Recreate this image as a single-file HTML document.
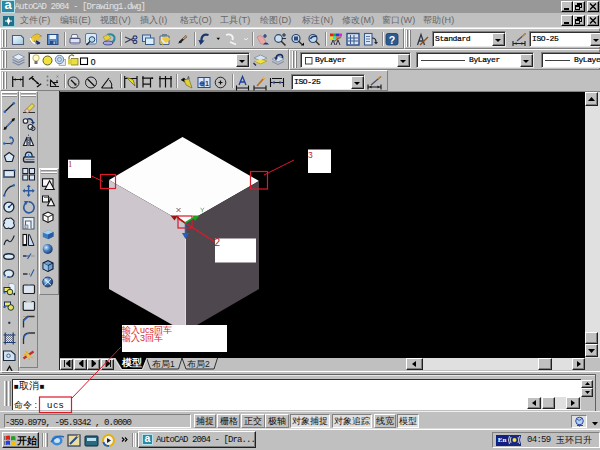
<!DOCTYPE html>
<html><head><meta charset="utf-8">
<style>
*{margin:0;padding:0;box-sizing:border-box}
html,body{width:600px;height:450px;overflow:hidden;background:#c0c0c0;font-family:"Liberation Sans",sans-serif;position:relative}
.a{position:absolute}
.mono{font-family:"Liberation Mono",monospace}
.rz{border-top:1px solid #fff;border-left:1px solid #fff;border-right:1px solid #808080;border-bottom:1px solid #808080}
.sk{border-top:1px solid #808080;border-left:1px solid #808080;border-right:1px solid #fff;border-bottom:1px solid #fff}
.grip{position:absolute;width:2px;border-left:1px solid #fff;border-right:1px solid #808080}
.sep{position:absolute;width:2px;border-left:1px solid #8a8a8a;border-right:1px solid #f4f4f4}
.hsep{position:absolute;height:2px;border-top:1px solid #8a8a8a;border-bottom:1px solid #f4f4f4}
.wbtn{position:absolute;width:12px;height:11px;background:#c0c0c0;border-top:1px solid #fff;border-left:1px solid #fff;border-right:1px solid #000;border-bottom:1px solid #000;box-shadow:inset -1px -1px #808080}
.btn{position:absolute;background:#c0c0c0;border-top:1px solid #fff;border-left:1px solid #fff;border-right:1px solid #202020;border-bottom:1px solid #202020;box-shadow:inset -1px -1px #808080}
.dd{position:absolute;background:#fff;border-top:1px solid #808080;border-left:1px solid #808080;border-right:1px solid #e8e8e8;border-bottom:1px solid #e8e8e8;box-shadow:inset 1px 1px #303030}
.ddb{position:absolute;top:1px;right:0px;bottom:0px;width:12px;background:#c0c0c0;border-top:1px solid #fff;border-left:1px solid #fff;border-right:1px solid #202020;border-bottom:1px solid #202020;box-shadow:inset -1px -1px #808080}
.ddb:after{content:"";position:absolute;left:2px;top:5px;border-left:3.5px solid transparent;border-right:3.5px solid transparent;border-top:3.5px solid #000}
.menu{position:absolute;top:15px;font-size:9px;color:#666;line-height:10px;white-space:nowrap;letter-spacing:0.2px}
.ddt{position:absolute;font-family:"Liberation Mono",monospace;font-size:8px;line-height:10px;letter-spacing:-0.4px;color:#000;white-space:nowrap;-webkit-text-stroke:0.2px #000}
</style></head><body>
<div class="a" style="left:0;top:0;width:600px;height:13px;background:#989898"></div>
<div class="a" style="left:1px;top:0;width:14px;height:13px;background:#2a8aa4;border:1px solid #b8e0ea"></div>
<div class="a" style="left:2px;top:-2px;width:12px;height:14px;color:#fff;font:bold 13px/14px 'Liberation Sans',sans-serif;text-align:center">a</div>
<div class="a mono" style="left:14.5px;top:2.2px;font-size:9px;line-height:11px;color:#e4e4e4;letter-spacing:-0.9px;white-space:nowrap">AutoCAD 2004 - [Drawing1.dwg]</div>
<div class="wbtn" style="left:561px;top:1px"></div><div class="a" style="left:564px;top:8px;width:5px;height:2px;background:#000"></div><div class="wbtn" style="left:573px;top:1px"></div><div class="a" style="left:577px;top:3px;width:5px;height:5px;border:1px solid #000;border-top-width:2px"></div><div class="a" style="left:575px;top:5px;width:5px;height:5px;border:1px solid #000;border-top-width:2px;background:#c0c0c0"></div><div class="wbtn" style="left:587px;top:1px"></div><svg class="a" style="left:589px;top:3px" width="8" height="7" viewBox="0 0 8 7"><path d="M1 0.5 L7 6.5 M7 0.5 L1 6.5" stroke="#000" stroke-width="1.4"/></svg>

<div class="a" style="left:2px;top:15px;width:13px;height:12px;background:#1f6f88;border:1px solid #9ccbd8"></div>
<svg class="a" style="left:4px;top:17px" width="9" height="8" viewBox="0 0 9 8"><path d="M4.5 0.5 v7 M1 4 h7" stroke="#fff" stroke-width="1.2"/><rect x="3" y="2.5" width="3" height="3" fill="#fff"/></svg>

<div class="menu" style="left:20px">文件(F)</div>
<div class="menu" style="left:60px">编辑(E)</div>
<div class="menu" style="left:100px">视图(V)</div>
<div class="menu" style="left:140px">插入(I)</div>
<div class="menu" style="left:180px">格式(O)</div>
<div class="menu" style="left:220px">工具(T)</div>
<div class="menu" style="left:260px">绘图(D)</div>
<div class="menu" style="left:302px">标注(N)</div>
<div class="menu" style="left:342px">修改(M)</div>
<div class="menu" style="left:382px">窗口(W)</div>
<div class="menu" style="left:423px">帮助(H)</div>
<div class="wbtn" style="left:561px;top:15px"></div><div class="a" style="left:564px;top:22px;width:5px;height:2px;background:#000"></div><div class="wbtn" style="left:573px;top:15px"></div><div class="a" style="left:577px;top:17px;width:5px;height:5px;border:1px solid #000;border-top-width:2px"></div><div class="a" style="left:575px;top:19px;width:5px;height:5px;border:1px solid #000;border-top-width:2px;background:#c0c0c0"></div><div class="wbtn" style="left:587px;top:15px"></div><svg class="a" style="left:589px;top:17px" width="8" height="7" viewBox="0 0 8 7"><path d="M1 0.5 L7 6.5 M7 0.5 L1 6.5" stroke="#000" stroke-width="1.4"/></svg>

<div class="a" style="left:0;top:27px;width:600px;height:1px;background:#e0e0e0"></div>
<div class="a rz" style="left:0;top:28px;width:404px;height:21px"></div>
<div class="a rz" style="left:404px;top:28px;width:196px;height:21px"></div>
<div class="a rz" style="left:0;top:49px;width:289px;height:21px"></div>
<div class="a rz" style="left:289px;top:49px;width:311px;height:21px"></div>
<div class="a rz" style="left:0;top:70px;width:388px;height:21px"></div>
<div class="grip" style="left:2px;top:30px;height:17px"></div><div class="grip" style="left:5px;top:30px;height:17px"></div>
<div class="grip" style="left:406px;top:30px;height:17px"></div><div class="grip" style="left:409px;top:30px;height:17px"></div>
<div class="grip" style="left:2px;top:51px;height:17px"></div><div class="grip" style="left:5px;top:51px;height:17px"></div>
<div class="grip" style="left:292px;top:51px;height:17px"></div><div class="grip" style="left:295px;top:51px;height:17px"></div>
<div class="grip" style="left:2px;top:72px;height:17px"></div><div class="grip" style="left:5px;top:72px;height:17px"></div>
<div class="sep" style="left:64px;top:32px;height:14px"></div>
<div class="sep" style="left:120px;top:32px;height:14px"></div>
<div class="sep" style="left:194px;top:32px;height:14px"></div>
<div class="sep" style="left:252px;top:32px;height:14px"></div>
<div class="sep" style="left:325px;top:32px;height:14px"></div>
<div class="sep" style="left:382px;top:32px;height:14px"></div>
<div class="sep" style="left:64px;top:74px;height:14px"></div>
<div class="sep" style="left:120px;top:74px;height:14px"></div>
<div class="sep" style="left:176px;top:74px;height:14px"></div>
<div class="sep" style="left:232px;top:74px;height:14px"></div>
<svg class="a" style="left:0px;top:0px" width="600" height="450" viewBox="0 0 600 450">
<defs>
<linearGradient id="gPage" x1="0" y1="0" x2="1" y2="1"><stop offset="0" stop-color="#f4fbff"/><stop offset="1" stop-color="#9cc8dc"/></linearGradient>
<linearGradient id="gBlue" x1="0" y1="0" x2="1" y2="1"><stop offset="0" stop-color="#8fc0e8"/><stop offset="1" stop-color="#2a62a8"/></linearGradient>
<radialGradient id="gSph" cx="0.35" cy="0.35" r="0.7"><stop offset="0" stop-color="#cfe6ff"/><stop offset="0.5" stop-color="#4a86c8"/><stop offset="1" stop-color="#1a3c70"/></radialGradient>
</defs>
<!-- new -->
<path d="M12.5 35.5 H21 L23.5 38 V44.5 H12.5 Z" fill="url(#gPage)" stroke="#4c5a7c" stroke-width="1.1"/>
<!-- open -->
<path d="M31 42 C30 38 33 34.5 38 34 L41.5 36 C38 37 34.5 39 34.5 42 Z" fill="#f0d040" stroke="#8a7020" stroke-width="0.6"/>
<path d="M32 36.5 L37 34.5 L41 38 L36 42 Z" fill="#e8c030"/>
<path d="M30.5 38 Q31 42 35 43.5" stroke="#fff" stroke-width="1.5" fill="none"/>
<path d="M35 42.5 L39.5 42.5 L38 45 Z" fill="#183078"/>
<path d="M36 41 L40 43.5" stroke="#183078" stroke-width="1.6"/>
<!-- save -->
<rect x="47.5" y="34.5" width="10.5" height="10" fill="#5a88c0" stroke="#284c84" stroke-width="1"/>
<rect x="49.5" y="35" width="6.5" height="4" fill="#e8f2fa"/>
<rect x="50" y="41" width="5.5" height="3.5" fill="#2a4c80"/>
<rect x="53.5" y="41.5" width="1.3" height="2.5" fill="#c8d8e8"/>
<!-- print -->
<path d="M72 34.5 H77 L78 38 H71 Z" fill="#f4f4f8" stroke="#505a78" stroke-width="0.8"/>
<path d="M70 38.5 H80 V43 H70 Z" fill="#e0e2ee" stroke="#4a5478" stroke-width="1"/>
<ellipse cx="75" cy="43.5" rx="4.5" ry="1.2" fill="#9098c0"/>
<!-- preview -->
<rect x="85.5" y="33.5" width="11" height="10.5" rx="1.5" fill="#d8ecf8" stroke="#5a78a8" stroke-width="1"/>
<circle cx="92" cy="39.5" r="2.8" fill="#b8dcf0" stroke="#2a4068" stroke-width="1"/>
<path d="M90 41.5 L86.5 45" stroke="#202830" stroke-width="1.4"/>
<!-- publish -->
<path d="M107 35 Q112 33 114.5 37 Q115 42 110 43" fill="none" stroke="#2a8aa0" stroke-width="2"/>
<path d="M103 37 L108 34.5 L111 38 L106 41 Z" fill="#e8d030" stroke="#8a7a20" stroke-width="0.5"/>
<ellipse cx="108" cy="43" rx="5" ry="2" fill="#a8a8e0" stroke="#3a3a80" stroke-width="0.8"/>
<!-- cut -->
<path d="M125 37 L134 41 M125 42.5 L134 38" stroke="#3a3a58" stroke-width="1.2"/>
<ellipse cx="135" cy="37.5" rx="2" ry="1.6" fill="none" stroke="#2a3a78" stroke-width="1.1"/>
<ellipse cx="135" cy="42" rx="2" ry="1.6" fill="none" stroke="#2a3a78" stroke-width="1.1"/>
<!-- copy -->
<rect x="142.5" y="35" width="8" height="6.5" fill="#c8e4f4" stroke="#3a5a8c" stroke-width="1"/>
<rect x="145.5" y="38" width="8.5" height="6.5" fill="#d8eef8" stroke="#3a5a8c" stroke-width="1"/>
<!-- paste -->
<path d="M160 36 H169 V44.5 H160 Z" fill="#d8e8f0" stroke="#506080" stroke-width="1"/>
<rect x="162" y="34" width="5" height="2.5" fill="#708090"/>
<path d="M161.5 38 L166 36.5 L170.5 39 L166 43 Z" fill="#f0c840"/>
<path d="M160 40.5 L163 44.5" stroke="#e0b030" stroke-width="1.5"/>
<!-- brush -->
<path d="M178 43.5 L180 41 L182 42.5 Z" fill="#1a1a1a"/>
<path d="M179.5 42.5 L186.5 36" stroke="#202020" stroke-width="2.2"/>
<path d="M183 39 L186.5 36" stroke="#c8a070" stroke-width="1.6"/>
<!-- undo -->
<path d="M208.5 35 C204 33.5 201 36 201.5 41" fill="none" stroke="#1a3870" stroke-width="2.2"/>
<path d="M198.5 40 L204.5 40.5 L200.5 45 Z" fill="#1a3870"/>
<path d="M216.5 37.8 H220 L218.25 40 Z" fill="#000"/>
<!-- redo (disabled) -->
<path d="M226 35 C230 33.5 234 35.5 232.5 40" fill="none" stroke="#f4f4f4" stroke-width="1.8"/>
<path d="M230 42 L236 44.5" stroke="#f4f4f4" stroke-width="1.5"/>
<path d="M244 38.5 L246 40 L248 38" stroke="#f0f0f0" stroke-width="1" fill="none"/>
<!-- pan -->
<path d="M257 37 Q260 34 263 37 L266 42 Q264 45 261 44 Z" fill="#e8a8a8" stroke="#c07878" stroke-width="0.6"/>
<path d="M265 34 v4 M263 36 h4" stroke="#1a3870" stroke-width="1.2"/>
<path d="M263 44.5 Q266 40.5 269 44.5 Z" fill="#1a3870"/>
<!-- zoom rt -->
<circle cx="278.5" cy="38.5" r="3.8" fill="#c8e0f0" stroke="#304868" stroke-width="1.2"/>
<path d="M281 41 L285.5 45.5" stroke="#3a3020" stroke-width="1.6"/>
<path d="M282 35 h4 M284 33 v4 M282 38.5 h4" stroke="#102040" stroke-width="0.9"/>
<!-- zoom window -->
<circle cx="296" cy="38.5" r="4" fill="#c8dcec" stroke="#304868" stroke-width="1.2"/>
<rect x="294" y="36.5" width="4" height="4" fill="#2a4a88"/>
<path d="M298.5 41 L302 44.5" stroke="#3a3020" stroke-width="1.5"/>
<path d="M301 45.5 L304 45.5 L304 42.5 Z" fill="#000"/>
<!-- zoom prev -->
<circle cx="313" cy="38.5" r="4" fill="#c0d8ec" stroke="#304868" stroke-width="1.2"/>
<path d="M310.5 39 Q312 35.5 317 36.5" stroke="#1a3870" stroke-width="1.4" fill="none"/>
<path d="M315.5 41 L319.5 45" stroke="#3a3020" stroke-width="1.5"/>
<!-- properties -->
<rect x="330" y="33.5" width="3" height="3" fill="#e02020"/><rect x="333" y="33.5" width="3" height="3" fill="#20b020"/><rect x="336" y="33.5" width="3" height="3" fill="#2040e0"/><rect x="339" y="33.5" width="3" height="3" fill="#e020e0"/>
<rect x="330" y="36.5" width="3" height="2.5" fill="#e0e020"/><rect x="333" y="36.5" width="3" height="2.5" fill="#20e0e0"/><rect x="336" y="36.5" width="3" height="2.5" fill="#e08020"/>
<path d="M331 45 L333 40 L335 45 M336 45 L338 40 L340 45" stroke="#303040" stroke-width="1" fill="none"/>
<path d="M333 42 L341 37" stroke="#806040" stroke-width="1.2"/>
<!-- design center -->
<rect x="347" y="33.5" width="12" height="11.5" fill="#d8e4f0" stroke="#2a4c8c" stroke-width="1.4"/>
<path d="M350.5 35 v9 M354 35 v9 M348 38 h10 M348 41 h10" stroke="#3a5a90" stroke-width="1"/>
<!-- tool palettes -->
<rect x="364.5" y="33.5" width="7.5" height="11.5" fill="#dde8f4" stroke="#3a5a90" stroke-width="1.1"/>
<path d="M366 36.5 h4 M366 39 h4 M366 41.5 h4" stroke="#5a78a8" stroke-width="1"/>
<path d="M372 38 Q376 38 376 42" fill="none" stroke="#202838" stroke-width="1.2"/>
<path d="M374 42 h4 l-2 2.5z" fill="#202838"/>
<!-- help -->
<rect x="386" y="33.5" width="12" height="11.5" rx="2" fill="#2a5a90" stroke="#183a68" stroke-width="0.8"/>
<text x="392" y="43.5" font-family="Liberation Sans" font-weight="bold" font-size="10.5" fill="#fff" text-anchor="middle">?</text>
<!-- text style -->
<path d="M417.5 45 L421 34.5 L424.5 45 M419 41 h4" stroke="#303848" stroke-width="1.3" fill="none"/>
<path d="M420 45 L428 37" stroke="#8a5020" stroke-width="1.4"/>
<!-- dim style -->
<path d="M513 43.5 h12 M513 41 v5 M525 41 v5" stroke="#202020" stroke-width="1.1"/>
<path d="M514.5 43.5 l2 -1.5 v3z M523.5 43.5 l-2 -1.5 v3z" fill="#202020"/>
<path d="M517 41 L525.5 33.5" stroke="#505060" stroke-width="1.3"/>
<path d="M522 36.5 L525.5 33.5" stroke="#c0904a" stroke-width="1.3"/>
</svg>

<div class="dd" style="left:432px;top:31px;width:74px;height:16px"><div class="ddb" style="width:13px"></div></div><div class="ddt" style="left:435px;top:34px">Standard</div>
<div class="dd" style="left:529px;top:31px;width:75px;height:16px"><div class="ddb" style="width:13px"></div></div><div class="ddt" style="left:532px;top:34px">ISO-25</div>
<div class="dd" style="left:28px;top:52px;width:222px;height:16px"><div class="ddb" style="width:13px"></div></div>
<div class="dd" style="left:300px;top:52px;width:111px;height:16px"><div class="ddb" style="width:13px"></div></div><div class="ddt" style="left:315px;top:55px">ByLayer</div>
<div class="dd" style="left:416px;top:52px;width:118px;height:16px"><div class="ddb" style="width:13px"></div></div><div class="ddt" style="left:469px;top:55px">ByLayer</div>
<div class="dd" style="left:541px;top:52px;width:80px;height:16px"><div class="ddb" style="width:13px"></div></div><div class="ddt" style="left:574px;top:55px">ByLayer</div>
<div class="dd" style="left:291px;top:74px;width:74px;height:16px"><div class="ddb" style="width:13px"></div></div><div class="ddt" style="left:294px;top:77px">ISO-25</div>
<div class="a" style="left:421px;top:60px;width:44px;height:1px;background:#404040"></div>
<div class="a" style="left:545px;top:60px;width:25px;height:1px;background:#404040"></div>
<svg class="a" style="left:0px;top:0px" width="600" height="450" viewBox="0 0 600 450">
<!-- layers icon -->
<path d="M12.5 57 L18.5 54 L24.5 57 L18.5 60 Z" fill="#e4eef8" stroke="#7a8aa8" stroke-width="0.8"/>
<path d="M12.5 59.5 L18.5 62.5 L24.5 59.5" fill="none" stroke="#7a8aa8" stroke-width="1.2"/>
<path d="M12.5 62 L18.5 65 L24.5 62" fill="none" stroke="#7a8aa8" stroke-width="1.2"/>
<!-- bulb -->
<circle cx="36" cy="58" r="3.2" fill="#fffbc8" stroke="#a8a060" stroke-width="0.8"/>
<rect x="34.5" y="61" width="3" height="3" fill="#707070"/>
<!-- sun -->
<circle cx="47.5" cy="60.5" r="4.5" fill="#f0e040" stroke="#606020" stroke-width="1"/>
<!-- freeze -->
<rect x="59" y="59.5" width="6.5" height="6" fill="#e8e8e8" stroke="#808080" stroke-width="0.6"/>
<circle cx="59.5" cy="59.5" r="4.2" fill="#c8daf0" stroke="#6a88b0" stroke-width="1"/>
<circle cx="59.5" cy="59.5" r="2" fill="none" stroke="#6a88b0" stroke-width="0.8"/>
<!-- lock -->
<path d="M69 60 V57 Q71 53.5 74 56" fill="none" stroke="#807020" stroke-width="1.2"/>
<rect x="71.5" y="58.5" width="6.5" height="6.5" fill="#e8e040" stroke="#807020" stroke-width="0.8"/>
<rect x="68" y="59" width="4" height="5.5" fill="#d8d040"/>
<!-- color square -->
<rect x="80.5" y="58" width="7" height="6.5" fill="#fff" stroke="#000" stroke-width="1.1"/>
<text x="90.8" y="65" font-family="Liberation Sans" font-size="8.5" fill="#181818" stroke="#181818" stroke-width="0.25">0</text>
<!-- make current -->
<path d="M254 58 L260.5 55 L267 58 L260.5 61 Z" fill="#d8e4f0" stroke="#7a8aa8" stroke-width="0.8"/>
<path d="M254 61 L260.5 64 L267 61 L262 59.5" fill="#f0e040" stroke="#b0a020" stroke-width="0.8"/>
<path d="M253.5 63 L256 65.5" stroke="#282850" stroke-width="1.3"/>
<!-- layer previous -->
<path d="M272 59 L278 56 L284 59 L278 62 Z" fill="#d8e4f0" stroke="#7a8aa8" stroke-width="0.8"/>
<path d="M272 61.5 L278 64.5 L284 61.5" fill="none" stroke="#7a8aa8" stroke-width="1"/>
<path d="M276 59 Q276 54.5 280.5 54.5 Q283 55 282.5 58" fill="none" stroke="#1a3060" stroke-width="1.6"/>
<path d="M274 57.5 L278 57.5 L276 60.5 Z" fill="#1a3060"/>
<!-- color dropdown square -->
<rect x="305.5" y="57.5" width="6.5" height="6.5" fill="#fff" stroke="#303030" stroke-width="0.9"/>
</svg>

<svg class="a" style="left:0px;top:0px" width="600" height="450" viewBox="0 0 600 450">
<!-- linear -->
<path d="M12.7 76.2 V87 M23 76.2 V87 M12.7 79.5 H23" stroke="#101010" stroke-width="1.2"/>
<path d="M13.2 79.5 l2.5 -1.3 v2.6z M22.5 79.5 l-2.5 -1.3 v2.6z" fill="#101010"/>
<!-- aligned -->
<path d="M29 79.5 L33.2 76.2 M31.8 78 L38.8 84.1 M37 87 L41.2 83.7" stroke="#101010" stroke-width="1.3"/>
<path d="M31.5 77.7 l2.8 0.6 l-1.5 1.8z M39 84.3 l-2.8 -0.6 l1.5 -1.8z" fill="#101010"/>
<!-- ordinate -->
<path d="M50.5 79.5 V86.5 H59 M50.5 80 L56 85.5 M52.5 82.5 H58 M57 80 V82.5" stroke="#101010" stroke-width="1.1" fill="none"/>
<circle cx="47.5" cy="76.5" r="0.9" fill="#707880"/><circle cx="47.5" cy="80.5" r="0.9" fill="#707880"/><circle cx="47.5" cy="85" r="0.9" fill="#707880"/><path d="M56.5 75.5 l2 2 M58.5 75.5 l-2 2" stroke="#707880" stroke-width="0.7"/>
<!-- radius -->
<circle cx="73.5" cy="82.5" r="5.5" fill="none" stroke="#202020" stroke-width="1"/>
<path d="M71 80 L76 85" stroke="#101010" stroke-width="1.3"/>
<path d="M76.5 85.5 l-2.5 -0.3 l2.2 -2.2z" fill="#101010"/>
<!-- diameter -->
<circle cx="91" cy="82.5" r="5.5" fill="none" stroke="#202020" stroke-width="1"/>
<path d="M87.5 79 L94.5 86" stroke="#101010" stroke-width="1.3"/>
<!-- angular -->
<path d="M101.5 88 H113 M101.5 88 L109 78" stroke="#101010" stroke-width="1.2"/>
<path d="M109.5 80 Q113 84 111.5 88" fill="none" stroke="#101010" stroke-width="1"/>
<!-- quick dimension -->
<path d="M124.7 76 V88 M137 76 V88 M124.7 78.5 H137" stroke="#101010" stroke-width="1.2"/>
<path d="M126.5 77.5 L135 86 L133 79.5 Z" fill="#e8e020" stroke="#606010" stroke-width="0.7"/>
<!-- baseline -->
<path d="M143 76 V87.5 M150.5 77.5 V87.5 M142 78.2 H152.5 M143 84.2 H150.5" stroke="#101010" stroke-width="1.2"/>
<circle cx="152.3" cy="78.2" r="0.9" fill="#101010"/>
<!-- continue -->
<path d="M160 76 V87.5 M165.5 76 V87.5 M171 76 V87.5 M159 78.7 H172" stroke="#101010" stroke-width="1.2"/>
<!-- quick leader -->
<path d="M181 80 L184 78 L191 86" stroke="#303030" stroke-width="1"/>
<path d="M184 80 L189 79 L192 88 L186 85 Z" fill="#e0d040" stroke="#606020" stroke-width="0.6"/>
<text x="187" y="79" font-size="4" fill="#404040" font-family="Liberation Sans">A</text>
<!-- tolerance -->
<rect x="198" y="77.5" width="12" height="10" fill="#d8e8f8" stroke="#2a4a90" stroke-width="1"/>
<path d="M204 77.5 v10" stroke="#2a4a90" stroke-width="1"/>
<text x="199" y="85.5" font-size="7" fill="#1a3a80" font-family="Liberation Sans" font-weight="bold">⊕1</text>
<!-- center mark -->
<circle cx="220.5" cy="82.5" r="5.3" fill="none" stroke="#202020" stroke-width="1"/>
<path d="M218.5 82.5 h4 M220.5 80.5 v4" stroke="#101010" stroke-width="1.2"/>
<!-- dimedit -->
<path d="M236.5 88 h12 M236.5 85.5 v5 M248.5 85.5 v5" stroke="#101010" stroke-width="1.1"/>
<path d="M239 85 L242.5 76.5 L246 85 M240.5 82 h4" stroke="#1a40a0" stroke-width="1.3" fill="none"/>
<!-- dimtedit -->
<path d="M254 88 h12 M254 85.5 v5 M266 85.5 v5" stroke="#101010" stroke-width="1.1"/>
<path d="M257 86 L264.5 77.5" stroke="#c07020" stroke-width="1.8"/>
<path d="M263 79 L265 77" stroke="#f0c060" stroke-width="1.5"/>
<!-- dim update -->
<path d="M270.5 82.5 h13 M270.5 78 v9 M283.5 78 v9 M272 78.5 h10" stroke="#101010" stroke-width="1.1"/>
<path d="M272 82.5 l2.5 -1.8 v3.6z M282 82.5 l-2.5 -1.8 v3.6z" fill="#2a4aa0"/>
<!-- dim style -->
<path d="M368 87 h13 M368 84.5 v5 M381 84.5 v5" stroke="#101010" stroke-width="1.1"/>
<path d="M369.5 87 l2 -1.5 v3z M379.5 87 l-2 -1.5 v3z" fill="#101010"/>
<path d="M371 85 L381 76.5" stroke="#505060" stroke-width="1.3"/>
<path d="M378 79 L381 76.5" stroke="#c0904a" stroke-width="1.3"/>
</svg>

<div class="a" style="left:59px;top:91px;width:541px;height:1px;background:#808080"></div>
<div class="a" style="left:60px;top:92px;width:525px;height:266px;background:#000"></div>
<div class="a" style="left:59px;top:91px;width:1px;height:279px;background:#202020"></div>
<svg class="a" style="left:0px;top:0px" width="600" height="450" viewBox="0 0 600 450">
 <polygon points="182.5,137 259,181 185,223.5 109,180" fill="#fdfdfd"/>
 <polygon points="109,180 185,223.5 185,332 109,289" fill="#cdc6cc"/>
 <polygon points="185,223.5 259,181 259,289 185,332" fill="#4e474e"/>
 <line x1="185.5" y1="224" x2="185.5" y2="332" stroke="#e0dce0" stroke-width="1"/>
 <rect x="68" y="159.7" width="23" height="18.3" fill="#fff"/>
 <rect x="308" y="149.5" width="23" height="23.5" fill="#fff"/>
 <rect x="215" y="238.5" width="41" height="24" fill="#fff"/>
 <rect x="122" y="325" width="105" height="27" fill="#fff"/>
 <rect x="100.5" y="174.5" width="15" height="14" fill="none" stroke="#dc1a28" stroke-width="1.2"/>
 <rect x="250.5" y="171.5" width="17" height="17.5" fill="none" stroke="#dc1a28" stroke-width="1.2"/>
 <rect x="178" y="216" width="14" height="12" fill="none" stroke="#dc1a28" stroke-width="1.2"/>
 <line x1="91.5" y1="176" x2="103" y2="181.5" stroke="#dc1a28" stroke-width="1"/>
 <line x1="264" y1="175" x2="294" y2="160" stroke="#dc1a28" stroke-width="1"/>
 <line x1="177.5" y1="218" x2="215" y2="242" stroke="#dc1a28" stroke-width="1.2"/>
 <polygon points="170.5,215.5 178,215.5 174.5,220.5" fill="#a01010"/>
 <polygon points="192.5,215.5 199.5,215.5 195,221" fill="#20a020"/>
 <line x1="176" y1="216" x2="185" y2="223" stroke="#b01010" stroke-width="1.5"/>
 <line x1="185" y1="223" x2="195" y2="217" stroke="#20a020" stroke-width="1.5"/>
 <line x1="185.5" y1="223" x2="185.5" y2="235" stroke="#2060c0" stroke-width="1.5"/>
 <polygon points="182,233 189,233 185.5,239" fill="#2060c0"/>
 <path d="M176.5 208 l4 4 M180.5 208 l-4 4" stroke="#704848" stroke-width="0.9"/>
 <path d="M200.5 207.8 l1.8 2.2 l1.8 -2.2 M202.3 210 v2.3" stroke="#70b070" stroke-width="0.9" fill="none"/>
</svg>

<div class="a" style="left:68px;top:160px;color:#a02838;font:8.5px/9px 'Liberation Serif',serif">1</div>
<div class="a" style="left:308px;top:150.5px;color:#b02838;font:8.5px/9px 'Liberation Sans',sans-serif">3</div>
<div class="a" style="left:214.5px;top:238px;color:#b02030;font:10px/10px 'Liberation Sans',sans-serif">2</div>
<div class="a" style="left:122px;top:325.5px;color:#d81e28;font-size:9px;line-height:8.3px;white-space:nowrap">输入ucs回车<br>输入3回车</div>
<div class="a rz" style="left:1px;top:91px;width:18px;height:282px"></div>
<div class="a rz" style="left:19px;top:91px;width:19px;height:277px"></div>
<div class="a rz" style="left:39px;top:168px;width:20px;height:127px"></div>
<div class="a" style="left:2px;top:92px;width:15px;height:2px;border-top:1px solid #fff;border-bottom:1px solid #909090"></div><div class="a" style="left:2px;top:95px;width:15px;height:2px;border-top:1px solid #fff;border-bottom:1px solid #909090"></div>
<div class="a" style="left:21px;top:92px;width:15px;height:2px;border-top:1px solid #fff;border-bottom:1px solid #909090"></div><div class="a" style="left:21px;top:95px;width:15px;height:2px;border-top:1px solid #fff;border-bottom:1px solid #909090"></div>
<div class="a" style="left:41px;top:169px;width:16px;height:2px;border-top:1px solid #fff;border-bottom:1px solid #909090"></div><div class="a" style="left:41px;top:172px;width:16px;height:2px;border-top:1px solid #fff;border-bottom:1px solid #909090"></div>
<svg class="a" style="left:0px;top:0px" width="600" height="450" viewBox="0 0 600 450">
<!-- col1: line -->
<path d="M4.5 112 L14 103" stroke="#101828" stroke-width="1.2"/>
<circle cx="4.8" cy="111.7" r="1.3" fill="#2a6ab8"/><circle cx="13.8" cy="103.2" r="1.3" fill="#2a6ab8"/>
<!-- xline -->
<path d="M4.5 129 L14 119" stroke="#101010" stroke-width="1.2"/>
<path d="M7 126.5 L11.5 121.5" stroke="#4a7ac0" stroke-width="1.5"/>
<path d="M3.5 130 l1 -3.5 l2.5 2.5z M15 118 l-1 3.5 l-2.5 -2.5z" fill="#101010"/>
<!-- pline -->
<path d="M4 143.5 H11.5 Q14 142 13 139 Q12 137 10.5 137.5" stroke="#1a3a78" stroke-width="1.1" fill="none"/>
<circle cx="4.3" cy="143.5" r="1.2" fill="#2a6ab8"/><circle cx="11.3" cy="143.5" r="1.2" fill="#2a6ab8"/><circle cx="10.5" cy="137.5" r="1.2" fill="#2a6ab8"/>
<!-- polygon -->
<path d="M9.2 152.5 L14 156 L12.2 161.5 H6.2 L4.4 156 Z" fill="#d8e8f4" stroke="#1a2030" stroke-width="1.1"/>
<!-- rectangle -->
<rect x="4" y="170.5" width="10.5" height="6.5" fill="#d8e8f4" stroke="#1a2030" stroke-width="1.2"/>
<circle cx="4" cy="177" r="1" fill="#2a6ab8"/><circle cx="14.5" cy="170.5" r="1" fill="#2a6ab8"/>
<!-- arc -->
<path d="M4.2 195.5 Q6 187 13.8 185.3" stroke="#1a2a40" stroke-width="1.2" fill="none"/>
<circle cx="4.2" cy="195.5" r="1.2" fill="#2a6ab8"/><circle cx="13.8" cy="185.3" r="1.2" fill="#2a6ab8"/>
<!-- circle -->
<circle cx="8.9" cy="207.1" r="5" fill="#d8ecf8" stroke="#1a2030" stroke-width="1.3"/>
<path d="M8.9 207.1 L12 204" stroke="#1a3060" stroke-width="1.2"/><circle cx="8.9" cy="207.1" r="1" fill="#1a3060"/>
<!-- revcloud -->
<path d="M5 220 Q6 217.5 8.5 218.5 Q11 217 12.5 219.5 Q15 220.5 13.5 223 Q15.5 226 13 227.5 Q11 229.5 8.5 228 Q5.5 229.5 4.5 227 Q2.5 224.5 4.5 223 Q3 221 5 220 Z" fill="#d8e8f4" stroke="#1a2030" stroke-width="1.1"/>
<!-- spline -->
<path d="M4 245 Q6 238 8.5 241 Q11 244 14.3 235.5" stroke="#1a2030" stroke-width="1.1" fill="none"/>
<!-- ellipse -->
<ellipse cx="8.9" cy="256.5" rx="5.2" ry="2.8" fill="#e0ecf4" stroke="#1a2a40" stroke-width="1.4"/>
<!-- ellipse arc -->
<path d="M5 276 Q2.5 272.5 6 270.5 Q10 269 13 271.5 Q14.5 274 12 276.5 Q10 277.5 8 277" stroke="#1a2a40" stroke-width="1.3" fill="#e0ecf4"/>
<circle cx="5" cy="275.5" r="1.1" fill="#2a6ab8"/><circle cx="8" cy="277" r="1.1" fill="#2a6ab8"/>
<!-- insert -->
<path d="M9 283.5 H13 L15 285.5 V294 H9 Z" fill="#e8f0f8" stroke="#8090a8" stroke-width="0.7"/>
<rect x="4" y="287.5" width="6" height="4" fill="#f0e860" stroke="#1a2a60" stroke-width="1"/>
<circle cx="10" cy="292" r="2.8" fill="#e8e060" stroke="#1a3a30" stroke-width="1"/>
<rect x="3.5" y="291.5" width="2" height="2" fill="#2a5ab0"/><path d="M13 294 l2 1.5 v-3z" fill="#000"/>
<!-- make block -->
<rect x="4.5" y="302" width="6" height="4" fill="#f0e860" stroke="#1a2a60" stroke-width="1"/>
<circle cx="10.8" cy="307.5" r="2.8" fill="#e8e060" stroke="#1a3a30" stroke-width="1"/>
<rect x="3.5" y="306" width="2" height="2" fill="#2a5ab0"/>
<!-- point -->
<rect x="8.3" y="321.8" width="2" height="2" fill="#1a2a50"/>
<!-- hatch -->
<defs><pattern id="chk" width="2" height="2" patternUnits="userSpaceOnUse"><rect width="2" height="2" fill="#e8e8f0"/><rect width="1" height="1" fill="#707888"/><rect x="1" y="1" width="1" height="1" fill="#707888"/></pattern></defs>
<rect x="5" y="334" width="8.5" height="9" fill="url(#chk)"/>
<path d="M3.5 335 h12 M3.5 342.5 h12 M5.2 332.5 v12 M13.2 332.5 v12" stroke="#1a3a70" stroke-width="1.1"/>
<!-- region -->
<path d="M3.5 351 H11 L15 354.5 V360.5 H3.5 Z" fill="#d0e4f4" stroke="#1a2a40" stroke-width="1.1"/>
<circle cx="8.5" cy="355.8" r="1.8" fill="none" stroke="#4a5a70" stroke-width="0.9"/>
<!-- mtext A -->
<path d="M7 371 L9.5 366.5 L12 371" stroke="#101010" stroke-width="1.4" fill="none"/>

<!-- col2: erase -->
<path d="M23 112.5 H35" stroke="#202020" stroke-width="0.9"/>
<path d="M25 110.5 L32 103.5 L34.5 106 L27.5 113 Z" fill="#e8d850" stroke="#706020" stroke-width="0.6"/>
<path d="M24.5 111 L27 108.5 L29.5 111 L27.5 113 Z" fill="#f0c8c8" stroke="#806060" stroke-width="0.6"/>
<!-- copy -->
<circle cx="25.5" cy="121" r="2.3" fill="#f4f4f4" stroke="#202838" stroke-width="1.1"/>
<circle cx="30.5" cy="127" r="2.5" fill="#f4f4f4" stroke="#202838" stroke-width="1.1"/>
<path d="M27.5 119 Q32 118 33 122.5" stroke="#1a3a78" stroke-width="1.4" fill="none"/>
<path d="M31 122 h4 l-2 2.5z" fill="#1a3a78"/>
<circle cx="33" cy="128.5" r="2" fill="none" stroke="#202838" stroke-width="1"/>
<!-- mirror -->
<path d="M28.5 134.5 V146.5" stroke="#506080" stroke-width="1" stroke-dasharray="1.5 1"/>
<path d="M27 137 L23.5 145.5 H27 Z" fill="#f4f4f4" stroke="#1a2030" stroke-width="1.1"/>
<path d="M30 137 L33.5 145.5 H30 Z" fill="#f4f4f4" stroke="#1a2030" stroke-width="1.1"/>
<!-- offset -->
<path d="M25.2 157 Q25.2 152.2 28.7 152.2 Q32.2 152.2 32.2 157" stroke="#1a2030" stroke-width="1.2" fill="#b8d4ec"/>
<path d="M34.5 157 H25 Q23.5 157 23.5 159.5 Q23.5 162 25 162 H34.5" stroke="#1a2030" stroke-width="1.3" fill="none"/>
<path d="M25.5 159.6 H34.5 M25.5 157.2 H34.5" stroke="#3a80c8" stroke-width="1"/>
<path d="M28.7 154 V157" stroke="#3a80c8" stroke-width="1"/>
<!-- array -->
<rect x="22.8" y="168.5" width="5" height="5" fill="#d8e4f0" stroke="#1a2030" stroke-width="1"/>
<rect x="29.5" y="168.5" width="5" height="5" fill="#d8e4f0" stroke="#1a2030" stroke-width="1"/>
<rect x="22.8" y="175" width="5" height="5" fill="#d8e4f0" stroke="#1a2030" stroke-width="1"/>
<rect x="29.5" y="175" width="5" height="5" fill="#d8e4f0" stroke="#1a2030" stroke-width="1"/>
<!-- move -->
<path d="M28.6 185.5 V196 M23.2 190.7 H34" stroke="#2a5aa0" stroke-width="1.4"/>
<path d="M28.6 184.5 l-2 2.5 h4z M28.6 197 l-2 -2.5 h4z M22.5 190.7 l2.5 -2 v4z M34.8 190.7 l-2.5 -2 v4z" fill="#2a5aa0"/>
<!-- rotate -->
<path d="M25.5 203 Q22 208 25.5 211.5 Q29.5 214.5 33 211 Q35.5 207 32.5 203.5 Q30.5 201.5 28.5 202" stroke="#2a5aa0" stroke-width="1.6" fill="none"/>
<path d="M24 201 l4.5 0 l-2.5 4z" fill="#2a5aa0"/>
<!-- scale -->
<rect x="23" y="217.5" width="11" height="11.5" fill="#e8f0f8" stroke="#506070" stroke-width="1.1"/>
<path d="M25.5 228.5 V221 H31 V228.5" stroke="#506070" stroke-width="1.1" fill="#f4f8fc"/>
<rect x="25" y="225" width="3" height="3.5" fill="#c0ccd8" stroke="#506070" stroke-width="0.6"/>
<!-- stretch -->
<rect x="23" y="234.5" width="3.5" height="11" fill="#fff" stroke="#101010" stroke-width="1.1"/>
<path d="M28.5 234.5 L29.5 234.5 L34 245.5 H28.5 Z" fill="#c8dcf0" stroke="#1a2030" stroke-width="1"/>
<rect x="23" y="244" width="3.5" height="2" fill="#101010"/>
<!-- trim -->
<path d="M23 256 H26.5" stroke="#303040" stroke-width="1.5"/>
<path d="M27.5 259 L31 253.5" stroke="#2a5aa0" stroke-width="1.1"/>
<path d="M31.5 256 H35" stroke="#606878" stroke-width="1" stroke-dasharray="1 1"/>
<path d="M26.5 256 H30" stroke="#2a5aa0" stroke-width="1"/>
<!-- extend -->
<path d="M23 274 H27" stroke="#303040" stroke-width="1.5"/>
<path d="M27 274 H31" stroke="#2a5aa0" stroke-width="1" stroke-dasharray="1 1"/>
<path d="M30.5 276.5 L34 269.5" stroke="#2a5aa0" stroke-width="1.1"/>
<!-- break at point -->
<rect x="23.2" y="285" width="11.3" height="8.5" rx="1" fill="#dde6ee" stroke="#202020" stroke-width="1.2"/>
<rect x="28" y="284" width="2" height="1.5" fill="#6a88b0"/>
<!-- break -->
<rect x="23.2" y="301.5" width="11.3" height="8.8" rx="1" fill="#dde6ee" stroke="#202020" stroke-width="1.2"/>
<rect x="26" y="300.5" width="5.5" height="2" fill="#c0c0c0"/>
<rect x="25.2" y="301" width="1.2" height="1.5" fill="#6a88b0"/><rect x="31" y="301" width="1.2" height="1.5" fill="#6a88b0"/>
<!-- chamfer -->
<path d="M23.5 327.5 V320 L27.5 316.5 H34.5" stroke="#303030" stroke-width="1.3" fill="none"/>
<path d="M23.5 321 L28.5 316.5" stroke="#2a6ac0" stroke-width="1.2"/>
<path d="M23 316.5 H26" stroke="#c09060" stroke-width="0.8"/>
<!-- fillet -->
<path d="M23.5 344 V339 Q23.5 333 29.5 333 H35" stroke="#303030" stroke-width="1.3" fill="none"/>
<path d="M23.8 338 Q25 333.5 30 333.5" stroke="#2a6ac0" stroke-width="1.2" fill="none"/>
<!-- explode -->
<path d="M23.5 358.5 L33.5 351.5" stroke="#c03020" stroke-width="2.2"/>
<path d="M25.5 351 l2 2.5 M33 358 l-2.5 -1.5 M24 354.5 l2 0.5 M29 360 l0.5 -2" stroke="#e8b020" stroke-width="1.3"/>
<circle cx="28" cy="355.5" r="1.8" fill="#f0c040"/>

<!-- col3 -->
<rect x="42.5" y="178.8" width="10.5" height="7.5" fill="#f8f8f8" stroke="#101010" stroke-width="1.1"/>
<path d="M45 189.5 L49.6 180.8 L54.2 189.5 Z" fill="#f8f8f8" stroke="#101010" stroke-width="1.1"/>
<rect x="42.5" y="196" width="6" height="6" fill="#f4f4f4" stroke="#101010" stroke-width="1"/>
<path d="M44 197.5 h6 v5.5" stroke="#404040" stroke-width="0.7" fill="none"/>
<path d="M47.5 205.8 L51 198.5 L54.5 205.8 Z" fill="#f8f8f8" stroke="#101010" stroke-width="1.1"/>
<path d="M43 214.5 L48 212 L53 214.5 V220 L48 222.5 L43 220 Z" fill="#f8f8f8" stroke="#101010" stroke-width="1.1"/>
<path d="M43 214.5 L48 217 L53 214.5 M48 217 V222.5" stroke="#101010" stroke-width="0.9" fill="none"/>
<path d="M42.8 232.5 L48.5 230 L53.5 232 V236.5 L48 239.3 L42.8 237 Z" fill="#3a7ac0"/>
<path d="M42.8 232.5 L48.5 230 L53.5 232 L48 234.5 Z" fill="#a8d0f0"/>
<path d="M48 234.5 V239.3 L53.5 236.5 V232 Z" fill="#2a5aa0"/>
<circle cx="47.7" cy="249" r="5" fill="url(#gSph2)"/>
<path d="M43 263 L48 260.5 L53 263 V269 L48 271.5 L43 269 Z" fill="#6aa0d8" stroke="#101828" stroke-width="1.1"/>
<path d="M43 263 L48 265.5 L53 263 M48 265.5 V271.5" stroke="#101828" stroke-width="0.9" fill="none"/>
<path d="M43.5 263 L48 265.5 L48 271 L43.5 268.8Z" fill="#a8d0f0" opacity="0.7"/>
<circle cx="47.7" cy="282" r="5" fill="url(#gSph2)" stroke="#203050" stroke-width="0.8"/>
<path d="M44.5 278.8 L51 285.2 M51 278.8 L44.5 285.2" stroke="#e8f0f8" stroke-width="1"/>
<defs><radialGradient id="gSph2" cx="0.35" cy="0.35" r="0.7"><stop offset="0" stop-color="#d8ecff"/><stop offset="0.45" stop-color="#4a86c8"/><stop offset="1" stop-color="#1a3468"/></radialGradient></defs>
</svg>

<div class="a" style="left:585px;top:92px;width:15px;height:266px;background:#e0e0e0"></div>
<div class="btn" style="left:585px;top:92px;width:13px;height:14px"></div>
<svg class="a" style="left:588px;top:97px" width="7" height="4" viewBox="0 0 7 4"><path d="M0 4 L3.5 0 L7 4Z" fill="#000"/></svg>

<div class="btn" style="left:585px;top:332px;width:13px;height:12px"></div>
<div class="btn" style="left:585px;top:344px;width:13px;height:13px"></div>
<svg class="a" style="left:588px;top:349px" width="7" height="4" viewBox="0 0 7 4"><path d="M0 0 L3.5 4 L7 0Z" fill="#000"/></svg>

<div class="a" style="left:60px;top:358px;width:346px;height:12px;background:#c0c0c0"></div>
<div class="btn" style="left:60px;top:358.5px;width:13px;height:11px"></div>
<svg class="a" style="left:63px;top:360px" width="8" height="7" viewBox="0 0 8 7"><g fill="#000" stroke="#000" stroke-width="0.9"><path d="M1.5 0 V7 M7 0 L3 3.5 L7 7Z"/></g></svg>

<div class="btn" style="left:73.5px;top:358.5px;width:13px;height:11px"></div>
<svg class="a" style="left:76.5px;top:360px" width="8" height="7" viewBox="0 0 8 7"><g fill="#000" stroke="#000" stroke-width="0.9"><path d="M6 0 L2 3.5 L6 7Z"/></g></svg>

<div class="btn" style="left:87px;top:358.5px;width:13px;height:11px"></div>
<svg class="a" style="left:90px;top:360px" width="8" height="7" viewBox="0 0 8 7"><g fill="#000" stroke="#000" stroke-width="0.9"><path d="M2 0 L6 3.5 L2 7Z"/></g></svg>

<div class="btn" style="left:100.5px;top:358.5px;width:13px;height:11px"></div>
<svg class="a" style="left:103.5px;top:360px" width="8" height="7" viewBox="0 0 8 7"><g fill="#000" stroke="#000" stroke-width="0.9"><path d="M2 0 L6 3.5 L2 7Z M6.5 0 V7"/></g></svg>

<svg class="a" style="left:0px;top:0px" width="600" height="450" viewBox="0 0 600 450">
<path d="M146.5 358 L142 369 H122 L115.5 358 Z" fill="#000"/>
<path d="M146.5 358 L150.5 369 H178.5 L182 358" fill="#c4c4c4" stroke="#202020" stroke-width="0.9"/>
<path d="M182 358 L186 369 H214 L217.5 358" fill="#c4c4c4" stroke="#202020" stroke-width="0.9"/>
<path d="M114 358 L121.5 369.5 H142.5 L147 358" fill="none" stroke="#e8e8e8" stroke-width="0.8"/>
</svg>

<div class="a" style="left:122px;top:358px;color:#fff;font-size:9.5px;line-height:10px;font-weight:bold;white-space:nowrap">模型</div>
<div class="a" style="left:152px;top:359px;color:#202020;font-size:8.5px;line-height:10px;white-space:nowrap">布局1</div>
<div class="a" style="left:187px;top:359px;color:#202020;font-size:8.5px;line-height:10px;white-space:nowrap">布局2</div>
<div class="a" style="left:406px;top:358px;width:179px;height:12px;background:#e0e0e0"></div>
<div class="btn" style="left:406px;top:358px;width:17px;height:12px"></div>
<svg class="a" style="left:412px;top:361px" width="4" height="6" viewBox="0 0 4 6"><path d="M4 0 L0 3 L4 6Z" fill="#000"/></svg>

<div class="btn" style="left:538px;top:358px;width:14px;height:12px"></div>
<div class="btn" style="left:572px;top:358px;width:13px;height:12px"></div>
<svg class="a" style="left:577px;top:361px" width="4" height="6" viewBox="0 0 4 6"><path d="M0 0 L4 3 L0 6Z" fill="#000"/></svg>

<div class="a" style="left:0;top:371px;width:600px;height:1px;background:#fff"></div>
<div class="a" style="left:0;top:374px;width:596px;height:1px;background:#606060"></div>
<div class="a" style="left:0;top:375px;width:596px;height:1px;background:#e8e8e8"></div>
<div class="a" style="left:595px;top:374px;width:1px;height:38px;background:#606060"></div>
<div class="grip" style="left:4px;top:381px;height:25px;width:3px"></div><div class="grip" style="left:8px;top:381px;height:25px;width:3px"></div>
<div class="a" style="left:12px;top:379px;width:569px;height:31px;background:#fff;border-top:1px solid #303030;border-left:1px solid #303030"></div>
<div class="btn" style="left:581px;top:380px;width:12px;height:8px"></div>
<div class="btn" style="left:581px;top:388px;width:12px;height:9px"></div>
<svg class="a" style="left:585px;top:382px" width="5" height="3" viewBox="0 0 5 3"><path d="M0 3 L2.5 0 L5 3Z" fill="#000"/></svg>

<svg class="a" style="left:585px;top:391px" width="5" height="3" viewBox="0 0 5 3"><path d="M0 0 L2.5 3 L5 0Z" fill="#000"/></svg>

<div class="a" style="left:527px;top:397px;width:54px;height:12px;background:#e0e0e0"></div>
<div class="btn" style="left:527px;top:397px;width:14px;height:12px"></div>
<svg class="a" style="left:532px;top:400px" width="4" height="6" viewBox="0 0 4 6"><path d="M4 0 L0 3 L4 6Z" fill="#000"/></svg>

<div class="btn" style="left:542px;top:397px;width:13px;height:12px"></div>
<div class="btn" style="left:566px;top:397px;width:14px;height:12px"></div>
<svg class="a" style="left:571px;top:400px" width="4" height="6" viewBox="0 0 4 6"><path d="M0 0 L4 3 L0 6Z" fill="#000"/></svg>

<div class="a" style="left:14px;top:380.5px;color:#101010;font-size:10px;line-height:10px;white-space:nowrap;letter-spacing:0.3px"><span style="font-size:8px">■</span>取消<span style="font-size:8px">■</span></div>
<div class="a" style="left:14px;top:399.5px;color:#101010;font-size:9px;line-height:10px;white-space:nowrap">命令 :</div>
<div class="a" style="left:47px;top:400px;color:#101010;font:9.5px/10px 'Liberation Sans',sans-serif;white-space:nowrap;letter-spacing:0.9px">ucs</div>
<div class="a" style="left:0;top:411px;width:600px;height:1px;background:#f0f0f0"></div>
<div class="a sk" style="left:4px;top:414px;width:187px;height:14px"></div>
<div class="a mono" style="left:5px;top:417.5px;font-size:9px;line-height:11px;color:#101010;letter-spacing:-0.9px;white-space:nowrap">-359.8979, -95.9342 , 0.0000</div>
<div class="a rz" style="left:194px;top:414px;width:22px;height:14px;background:#c0c0c0"></div>
<div class="a" style="left:194px;top:416px;width:22px;text-align:center;color:#101010;font-size:8.5px;line-height:10px;white-space:nowrap">捕捉</div>
<div class="a rz" style="left:217px;top:414px;width:23px;height:14px;background:#c0c0c0"></div>
<div class="a" style="left:217px;top:416px;width:23px;text-align:center;color:#101010;font-size:8.5px;line-height:10px;white-space:nowrap">栅格</div>
<div class="a rz" style="left:241px;top:414px;width:24px;height:14px;background:#c0c0c0"></div>
<div class="a" style="left:241px;top:416px;width:24px;text-align:center;color:#101010;font-size:8.5px;line-height:10px;white-space:nowrap">正交</div>
<div class="a rz" style="left:265px;top:414px;width:24px;height:14px;background:#c0c0c0"></div>
<div class="a" style="left:265px;top:416px;width:24px;text-align:center;color:#101010;font-size:8.5px;line-height:10px;white-space:nowrap">极轴</div>
<div class="a sk" style="left:290px;top:414px;width:40px;height:14px;background:#e0e0e0"></div>
<div class="a" style="left:290px;top:416px;width:40px;text-align:center;color:#101010;font-size:8.5px;line-height:10px;white-space:nowrap">对象捕捉</div>
<div class="a sk" style="left:332px;top:414px;width:40px;height:14px;background:#e0e0e0"></div>
<div class="a" style="left:332px;top:416px;width:40px;text-align:center;color:#101010;font-size:8.5px;line-height:10px;white-space:nowrap">对象追踪</div>
<div class="a rz" style="left:374px;top:414px;width:22px;height:14px;background:#c0c0c0"></div>
<div class="a" style="left:374px;top:416px;width:22px;text-align:center;color:#101010;font-size:8.5px;line-height:10px;white-space:nowrap">线宽</div>
<div class="a sk" style="left:397px;top:414px;width:22px;height:14px;background:#e0e0e0"></div>
<div class="a" style="left:397px;top:416px;width:22px;text-align:center;color:#101010;font-size:8.5px;line-height:10px;white-space:nowrap">模型</div>
<div class="a sk" style="left:571px;top:415px;width:16px;height:13px;background:#e0e0e0"></div>
<svg class="a" style="left:574px;top:416px" width="11" height="11" viewBox="0 0 11 11"><circle cx="5.5" cy="5" r="3.8" fill="#b8d0f0" stroke="#2a4aa0" stroke-width="1"/><path d="M3 9.5 h6 M5.5 8.5 v2" stroke="#2a4aa0" stroke-width="1.2"/><path d="M3 3 Q6 6 8 2" stroke="#2a4aa0" stroke-width="0.9" fill="none"/></svg>

<svg class="a" style="left:592px;top:422px" width="6" height="4" viewBox="0 0 6 4"><path d="M0 0 L3 3.5 L6 0Z" fill="#000"/></svg>

<div class="a" style="left:0;top:428px;width:600px;height:1px;background:#d8d8d8"></div>
<div class="a" style="left:0;top:429px;width:600px;height:21px;background:#c0c0c0;border-top:1px solid #fff"></div>
<div class="btn" style="left:2px;top:432px;width:37px;height:16px"></div>
<svg class="a" style="left:4px;top:434px" width="13" height="12" viewBox="0 0 13 12"><path d="M2 2 Q5 1 6 2 V6 Q4 5 2 6Z" fill="#e02010"/><path d="M7 2.5 Q9 1.5 11.5 2.5 V6.5 Q9 5.5 7 6.5Z" fill="#20a020"/><path d="M2 7 Q4 6 6 7 V11 Q4 10 2 11Z" fill="#2040e0"/><path d="M7 7.5 Q9 6.5 11.5 7.5 V11.5 Q9 10.5 7 11.5Z" fill="#f0c010"/><path d="M0 3 h1.5 M0 5 h1.5 M0 8 h1.5 M0 10 h1.5" stroke="#000" stroke-width="0.8"/></svg>

<div class="a" style="left:17px;top:435px;color:#000;font-size:9.5px;line-height:11px;font-weight:bold;white-space:nowrap">开始</div>
<div class="sep" style="left:42px;top:433px;height:14px"></div>
<div class="grip" style="left:45px;top:433px;height:14px;width:3px"></div>
<svg class="a" style="left:0px;top:0px" width="600" height="450" viewBox="0 0 600 450">
<ellipse cx="57" cy="440.5" rx="5.5" ry="5" fill="#3a8ad8"/>
<ellipse cx="57" cy="440.5" rx="3" ry="2.5" fill="#c8e4f8"/>
<path d="M51 442 Q57 434 64 437" stroke="#2a6ab8" stroke-width="1.5" fill="none"/>
<rect x="68" y="435" width="12" height="11" fill="#e8e0a0" stroke="#303850" stroke-width="1.2"/>
<path d="M70 444 L78 436" stroke="#2a4a90" stroke-width="2"/>
<path d="M77 437 L79 435" stroke="#f0c040" stroke-width="1.5"/>
<rect x="85" y="436" width="13" height="10" rx="1" fill="#2a6a80" stroke="#102838" stroke-width="1"/>
<rect x="87" y="438" width="9" height="3" fill="#b8e0f0"/>
<circle cx="108.5" cy="440.5" r="5.5" fill="#f0f0f0" stroke="#e8b000" stroke-width="2"/>
<path d="M103.5 442 Q104 446 109 446" stroke="#2060c0" stroke-width="2" fill="none"/>
<path d="M107 438 L111 440.5 L107 443Z" fill="#202020"/>
<path d="M122 437.5 l2 2 l-2 2 M125 437.5 l2 2 l-2 2" stroke="#000" stroke-width="1.1" fill="none"/>
</svg>

<div class="sep" style="left:132px;top:433px;height:14px"></div>
<div class="grip" style="left:135px;top:433px;height:14px;width:3px"></div>
<div class="btn" style="left:138px;top:431px;width:118px;height:17px"></div>
<div class="a" style="left:142px;top:434px;width:11px;height:11px;background:#2a8aa4;border:1px solid #b8e0ea"></div>
<div class="a" style="left:142px;top:432px;width:11px;height:12px;color:#fff;font:bold 10.5px/12px 'Liberation Sans',sans-serif;text-align:center">a</div>
<div class="a mono" style="left:156px;top:435px;font-size:9px;line-height:11px;color:#101010;letter-spacing:-0.9px;white-space:nowrap">AutoCAD 2004 - [Dra...</div>
<div class="a sk" style="left:492px;top:432px;width:108px;height:16px"></div>
<div class="a" style="left:496px;top:434.5px;width:12px;height:11px;background:#102080;color:#fff;font:bold 7px/11px 'Liberation Serif',serif;text-align:center">En</div>
<div class="a" style="left:508px;top:434.5px;width:13px;height:11px;background:#182880"></div>
<svg class="a" style="left:508px;top:434px" width="13" height="12" viewBox="0 0 13 12"><circle cx="6.5" cy="6" r="2" fill="#f0e040"/><path d="M3 3 Q1.5 6 3 9 M10 3 Q11.5 6 10 9 M1.5 2 Q-0.5 6 1.5 10 M11.5 2 Q13.5 6 11.5 10" stroke="#e0e0e0" stroke-width="0.9" fill="none"/></svg>

<div class="a mono" style="left:527px;top:435px;font-size:9px;line-height:11px;color:#101010;letter-spacing:-0.7px;white-space:nowrap">04:59</div>
<div class="a" style="left:556px;top:435px;font-size:9px;line-height:11px;color:#101010;white-space:nowrap">玉环日升</div>
<svg class="a" style="left:0px;top:0px" width="600" height="450" viewBox="0 0 600 450"><line x1="72" y1="398" x2="121" y2="347" stroke="#dc1a28" stroke-width="1"/><rect x="39.5" y="397" width="32" height="15.5" fill="none" stroke="#dc1a28" stroke-width="1.2"/></svg>

</body></html>
